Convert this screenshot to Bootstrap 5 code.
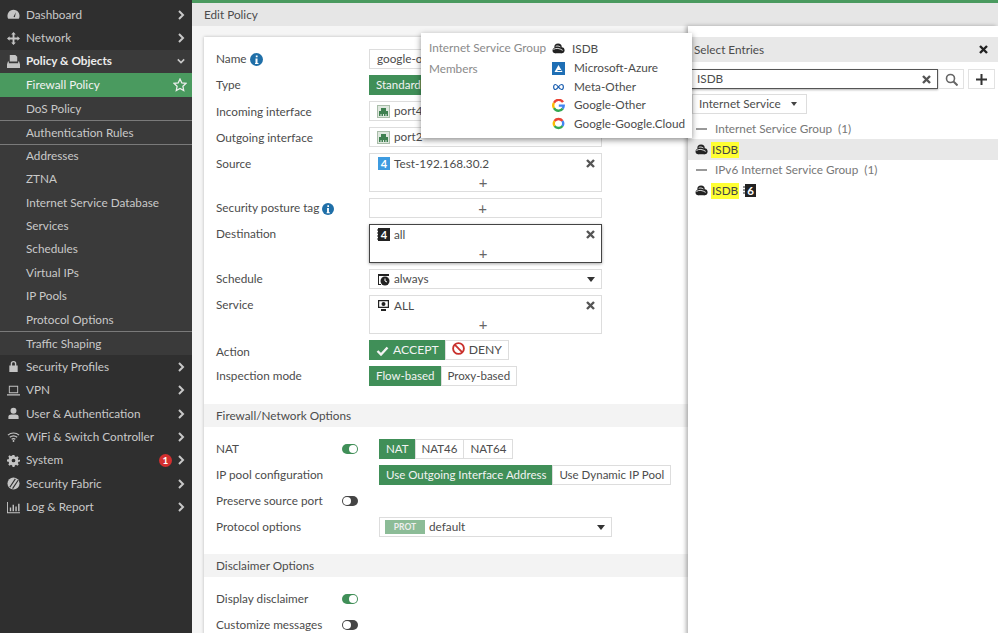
<!DOCTYPE html>
<html lang="en"><head><meta charset="utf-8"><title>Edit Policy</title>
<link rel="stylesheet" href="https://cdn.jsdelivr.net/npm/bootstrap@5.3.0/dist/css/bootstrap.min.css">
<style>
html,body{height:633px;overflow:hidden}
body{font-family:Lato,"Liberation Sans",sans-serif;font-size:11.75px;color:#4c4c4c;background:#f5f5f5;line-height:20px}
.fg-shell{width:998px;height:633px;position:relative;overflow:hidden}
.fg-side{width:192px;flex:none;background:#2f2f2f;color:#c9c9c9;padding-top:3px;height:633px}
.fg-item{height:23.4px;display:flex;align-items:center;padding-left:7px;padding-right:7px;position:relative;color:#c9c9c9}
.fg-item svg.ic{width:13px;height:13px;flex:none;margin-right:6px;fill:#c4c4c4}
.fg-item .chev{width:8px;height:10px;margin-left:auto;flex:none;stroke:#c8c8c8;stroke-width:2;fill:none}
.fg-open{background:#3a3a3a}
.fg-head{background:#3a3a3a;font-weight:700;color:#ececec}
.fg-sub{padding-left:26px;height:23.4px}
.fg-sep{border-top:1px solid #7a7a7a;height:23.7px}
.fg-active{background:#4a9a5f;color:#f2f2f2;height:23.7px}
.fg-star{margin-left:auto;width:14px;height:14px;fill:none;stroke:#eee;stroke-width:1.3;margin-right:-2px}
.fg-badge{background:#d32f2f;color:#fff;font-size:10px;font-weight:700;width:13px;height:13px;line-height:13px;border-radius:50%;text-align:center;margin-left:auto;margin-right:5px}
.fg-badge + .chev{margin-left:0}
.fg-main{flex:1;min-width:0;display:flex;flex-direction:column}
.fg-top{border-top:3px solid #4a9a5f;background:#e6e6e6;height:26px;padding:2px 12px;flex:none}
.fg-form{width:484px;margin-left:12px;margin-top:11px;background:#fff;box-shadow:0 0 3px rgba(0,0,0,.25);padding-top:12px;flex:none;height:600px}
.fg-row{display:flex;padding-left:12px;margin-bottom:6px;min-height:20px}
.fg-gap{margin-bottom:18px}
.fg-gap-s{margin-bottom:17px}
.fg-lab{width:153px;flex:none;line-height:20px;height:20px}
.fg-lab-low{padding-top:2px;line-height:18px}
.fg-lab-lower{padding-top:3px;line-height:18px}
.fg-lab-wide{width:163px}
.fg-box{width:233px;height:20px;border:1px solid #ddd;background:#fff;display:flex;align-items:center;padding:0 6px 0 7px;box-sizing:border-box;white-space:nowrap;overflow:hidden}
.fg-multi{height:39px;display:block;padding:0 6px 0 7px;position:relative}
.fg-line{display:flex;align-items:center;height:19px}
.fg-plus{text-align:center;height:18px;line-height:18px;font-size:15px;color:#666;padding-right:6px}
.fg-x{margin-left:auto;width:9px;height:9px;stroke:#555;stroke-width:2.4;fill:none;flex:none}
.fg-i{width:13px;height:13px;flex:none;margin-right:4px}
.fg-caret{margin-left:auto;width:0;height:0;border-left:4.5px solid transparent;border-right:4.5px solid transparent;border-top:5px solid #333;flex:none}
.fg-focus{border:1px solid #444;box-shadow:0 1px 3px rgba(0,0,0,.35)}
.fg-seg .btn{--bs-btn-padding-y:0;--bs-btn-padding-x:6px;--bs-btn-font-size:11.5px;--bs-btn-line-height:18px;--bs-btn-border-radius:0;--bs-btn-color:#4c4c4c;--bs-btn-border-color:#ddd;--bs-btn-bg:#fff;height:20px;flex:none;font-family:inherit;white-space:nowrap}
.fg-seg .fg-on{--bs-btn-bg:#408f58;--bs-btn-color:#f3f3f3;--bs-btn-border-color:#408f58;background:#408f58;color:#f3f3f3}
.fg-seg.fg-big .btn{--bs-btn-font-size:12.2px}
.fg-sec{background:#f3f3f3;height:23px;line-height:23px;padding-left:12px;margin-bottom:12px}
.fg-tog{width:16px;height:10px;border-radius:5px;background:#408f58;position:relative;flex:none;margin:5px 21px 0 -27px}
.fg-tog::after{content:"";position:absolute;right:1px;top:1px;width:8px;height:8px;border-radius:50%;background:#fff}
.fg-off{background:#444}
.fg-off::after{right:auto;left:1px}
.fg-panel{flex:1;background:#fff;box-shadow:-2px 0 4px rgba(0,0,0,.3);padding-top:11px;z-index:2;position:relative}
.fg-phead{background:#e8e8e8;height:25px;line-height:25px;padding:0 10px 0 6px;display:flex;align-items:center}
.fg-search{display:flex;margin:7px 0 0 2px;height:20px}
.fg-sinput{width:248px;border:1px solid #555;box-shadow:0 1px 2px rgba(0,0,0,.3);display:flex;align-items:center;padding:0 6px;height:20px}
.fg-sbtn{width:26px;height:20px;border:1px solid #e2e2e2;display:flex;align-items:center;justify-content:center}
.fg-sbtn-add{width:27px}
.fg-dd{width:115px;height:20px;border:1px solid #ddd;margin:5px 0 0 4px;padding:0 6px;display:flex;align-items:center;white-space:nowrap}
.fg-dd .fg-caret{border-top-color:#444;border-left-width:3.5px;border-right-width:3.5px;border-top-width:4px;margin-left:10px;margin-right:6px}
.fg-grp{display:flex;align-items:center;height:20px;color:#777;padding-left:8px;margin-top:5px}
.fg-grp-tight{margin-top:0}
.fg-grp i{display:block;width:11px;height:2.5px;background:#999;margin-right:8px}
.fg-ent{display:flex;align-items:center;height:21px;padding-left:7px}
.fg-ent .fg-i{margin-right:3px}
.fg-ent mark{background:#ffff33;padding:0 1px;color:#444;line-height:16px}
.fg-ent .fg-six{margin:0 0 0 4px}
.fg-sel{background:#e8e8e8;margin-top:0}
.fg-tip{position:absolute;left:421px;top:33px;width:271px;height:105px;background:#fff;box-shadow:0 2px 6px rgba(0,0,0,.45);z-index:5;padding:5px 8px;display:grid;grid-template-columns:123px 1fr;grid-template-rows:21px repeat(4,18.5px);white-space:nowrap}
.fg-tip .k{color:#8a8a8a}
.fg-tip .v{display:flex;align-items:center}
.fg-tip .v svg{width:13px;height:13px;margin-right:9px;flex:none}
.fg-tip .v svg.fg-tcloud{margin-right:7px}
.fg-prot{background:#8cbc97;color:#eee;font-size:8.5px;font-weight:700;width:40px;height:14px;line-height:14px;text-align:center;margin:0 4px 0 -2px;flex:none}
</style></head><body>
<svg width="0" height="0" class="d-none">
<symbol id="cloud" viewBox="0 0 14 14"><circle cx="6.500" cy="5.500" r="4" fill="#222"/><circle cx="3.500" cy="9.200" r="2.900" fill="#222"/><circle cx="10.300" cy="8.800" r="3.200" fill="#222"/><rect x="3.500" y="8" width="7" height="4.100" fill="#222"/><path d="M1.500 8c3-1.800 6.500-1.300 10 1M4 4.700c1.500-.7 3.300-.5 5 .6" stroke="#fff" stroke-width=".9" fill="none"/></symbol>
<symbol id="port" viewBox="0 0 13 13"><rect x=".5" y=".5" width="12" height="12" fill="#dfe8df" stroke="#a9bda9"/><path d="M2 11V6h2V3h5v3h2v5z" fill="#3f8050"/><path d="M4 9v2M6.500 9v2M9 9v2" stroke="#dfe8df"/></symbol>
<symbol id="v4" viewBox="0 0 13 13"><rect x="1" width="12" height="13" fill="#3d9be0"/><text x="7" y="10.800" font-size="11" font-weight="700" text-anchor="middle" fill="#fff" font-family="Lato">4</text></symbol>
<symbol id="v4d" viewBox="0 0 13 13"><rect x="1" width="12" height="13" fill="#222"/><path d="M0 2h2M0 5h2M0 8h2M0 11h2" stroke="#222"/><text x="7" y="10.800" font-size="11" font-weight="700" text-anchor="middle" fill="#fff" font-family="Lato">4</text></symbol>
</svg>
<div class="fg-shell d-flex">
<nav class="fg-side">
<div class="fg-item"><svg class="ic" viewBox="0 0 14 14"><path d="M7 2a6.500 6.500 0 0 0-6 9c.2.500.6.700 1 .700h10c.4 0 .8-.2 1-.7a6.500 6.500 0 0 0-6-9zM7 9.500l2.500-5-1 5.500z"/></svg>Dashboard<svg class="chev" viewBox="0 0 8 10"><path d="M2 1l4 4-4 4"/></svg></div>
<div class="fg-item"><svg class="ic" viewBox="0 0 14 14"><path d="M7 0l2.500 2.800H8V6h3.200V4.500L14 7l-2.800 2.500V8H8v3.200h1.500L7 14l-2.500-2.800H6V8H2.800v1.500L0 7l2.800-2.500V6H6V2.800H4.500z"/></svg>Network<svg class="chev" viewBox="0 0 8 10"><path d="M2 1l4 4-4 4"/></svg></div>
<div class="fg-open">
<div class="fg-item fg-head"><svg class="ic" viewBox="0 0 14 14"><path d="M3 0h6l2 2v5H3zM1 7h1v2h10V7h1l1 3v4H0v-4z"/></svg>Policy &amp; Objects<svg class="chev" viewBox="0 0 10 8"><path d="M1 2l4 4 4-4"/></svg></div>
<div class="fg-item fg-sub fg-active">Firewall Policy<svg class="fg-star" viewBox="0 0 14 14"><path d="M7 1l1.800 3.900 4.200.5-3.100 2.900.8 4.200L7 10.400 3.300 12.500l.8-4.200L1 5.400l4.200-.5z"/></svg></div>
<div class="fg-item fg-sub">DoS Policy</div>
<div class="fg-item fg-sub fg-sep">Authentication Rules</div>
<div class="fg-item fg-sub fg-sep">Addresses</div>
<div class="fg-item fg-sub">ZTNA</div>
<div class="fg-item fg-sub">Internet Service Database</div>
<div class="fg-item fg-sub">Services</div>
<div class="fg-item fg-sub">Schedules</div>
<div class="fg-item fg-sub">Virtual IPs</div>
<div class="fg-item fg-sub">IP Pools</div>
<div class="fg-item fg-sub">Protocol Options</div>
<div class="fg-item fg-sub fg-sep">Traffic Shaping</div>
</div>
<div class="fg-item"><svg class="ic" viewBox="0 0 14 14"><path d="M4 6V4a3 3 0 0 1 6 0v2h1.500v7h-9V6zm1.500 0h3V4a1.500 1.500 0 0 0-3 0z"/></svg>Security Profiles<svg class="chev" viewBox="0 0 8 10"><path d="M2 1l4 4-4 4"/></svg></div>
<div class="fg-item"><svg class="ic" viewBox="0 0 14 14"><path d="M2 2h10v8H2zm1 1v6h8V3zM0 11h14v1.500H0z"/></svg>VPN<svg class="chev" viewBox="0 0 8 10"><path d="M2 1l4 4-4 4"/></svg></div>
<div class="fg-item"><svg class="ic" viewBox="0 0 14 14"><circle cx="7" cy="4" r="3.200"/><path d="M1.500 13v-2.500C1.500 8.800 3 8 4.500 8h5c1.500 0 3 .8 3 2.500V13z"/></svg>User &amp; Authentication<svg class="chev" viewBox="0 0 8 10"><path d="M2 1l4 4-4 4"/></svg></div>
<div class="fg-item"><svg class="ic" viewBox="0 0 14 14"><path d="M1 5.500c3.500-3 8.500-3 12 0M3 7.800c2.500-2 5.500-2 8 0M5 10c1.200-.9 2.800-.9 4 0" stroke="#c4c4c4" stroke-width="1.300" fill="none"/><circle cx="7" cy="11.800" r="1"/></svg>WiFi &amp; Switch Controller<svg class="chev" viewBox="0 0 8 10"><path d="M2 1l4 4-4 4"/></svg></div>
<div class="fg-item"><svg class="ic" viewBox="0 0 14 14"><path d="M6 1h2l.4 1.700 1.300.6 1.500-.9 1.400 1.400-.9 1.500.6 1.300L14 6v2l-1.700.4-.6 1.300.9 1.500-1.400 1.400-1.500-.9-1.300.6L8 14H6l-.4-1.700-1.300-.6-1.500.9-1.400-1.400.9-1.500-.6-1.300L0 8V6l1.700-.4.600-1.300-.9-1.500 1.400-1.400 1.500.9 1.300-.6zM7 5a2 2 0 1 0 0 4 2 2 0 0 0 0-4z"/></svg>System<span class="fg-badge">1</span><svg class="chev" viewBox="0 0 8 10"><path d="M2 1l4 4-4 4"/></svg></div>
<div class="fg-item"><svg class="ic" viewBox="0 0 14 14"><circle cx="7" cy="7" r="6.500"/><path d="M3 11l6-9M6 12.500l6-9" stroke="#2f2f2f" stroke-width="1.200"/></svg>Security Fabric<svg class="chev" viewBox="0 0 8 10"><path d="M2 1l4 4-4 4"/></svg></div>
<div class="fg-item"><svg class="ic" viewBox="0 0 14 14"><path d="M0 1h1v11h13v1.200H0zM3 7h1.500v4H3zM6 4h1.500v7H6zM9 6h1.500v5H9zM12 3h1.500v8H12z"/></svg>Log &amp; Report<svg class="chev" viewBox="0 0 8 10"><path d="M2 1l4 4-4 4"/></svg></div>
</nav>
<div class="fg-main">
<div class="fg-top">Edit Policy</div>
<div class="d-flex flex-grow-1">
<section class="fg-form">
<div class="fg-row"><div class="fg-lab">Name <svg width="13" height="13" viewBox="0 0 13 13" class="align-text-bottom"><circle cx="6.500" cy="6.500" r="6.500" fill="#1f6fa8"/><path d="M5.500 5.500h2V10h1v1h-3.500v-1h.5zM5.800 2.500h1.800v1.800H5.800z" fill="#fff"/></svg></div><div class="fg-box">google-other</div></div>
<div class="fg-row"><div class="fg-lab">Type</div><div class="btn-group fg-seg"><button class="btn fg-on" type="button">Standard</button></div></div>
<div class="fg-row"><div class="fg-lab fg-lab-low">Incoming interface</div><div class="fg-box"><svg class="fg-i"><use href="#port"/></svg>port4</div></div>
<div class="fg-row"><div class="fg-lab fg-lab-low">Outgoing interface</div><div class="fg-box"><svg class="fg-i"><use href="#port"/></svg>port2</div></div>
<div class="fg-row"><div class="fg-lab fg-lab-low">Source</div><div class="fg-box fg-multi"><div class="fg-line"><svg class="fg-i"><use href="#v4"/></svg>Test-192.168.30.2<svg class="fg-x" viewBox="0 0 9 9"><path d="M1 1l7 7M8 1l-7 7"/></svg></div><div class="fg-plus">+</div></div></div>
<div class="fg-row"><div class="fg-lab">Security posture tag <svg width="12" height="12" viewBox="0 0 13 13" class="align-text-bottom"><circle cx="6.500" cy="6.500" r="6.500" fill="#1f6fa8"/><path d="M5.500 5.500h2V10h1v1h-3.500v-1h.5zM5.800 2.500h1.800v1.800H5.800z" fill="#fff"/></svg></div><div class="fg-box justify-content-center p-0"><span class="fg-plus">+</span></div></div>
<div class="fg-row"><div class="fg-lab">Destination</div><div class="fg-box fg-multi fg-focus"><div class="fg-line"><svg class="fg-i"><use href="#v4d"/></svg>all<svg class="fg-x" viewBox="0 0 9 9"><path d="M1 1l7 7M8 1l-7 7"/></svg></div><div class="fg-plus">+</div></div></div>
<div class="fg-row"><div class="fg-lab">Schedule</div><div class="fg-box"><svg class="fg-i" viewBox="0 0 13 13"><path d="M1 1h11v2H2v8h2v1H1z" fill="#222"/><circle cx="8" cy="8" r="4.500" fill="#222"/><path d="M8 5.500V8l2 1" stroke="#fff" fill="none"/></svg>always<span class="fg-caret"></span></div></div>
<div class="fg-row"><div class="fg-lab">Service</div><div class="fg-box fg-multi"><div class="fg-line"><svg class="fg-i" viewBox="0 0 13 13"><path d="M1 1h11v8H1zm1.200 1.200v5.600h8.600V2.200zM4 10h5v2H4z" fill="#222"/><circle cx="6.500" cy="5" r="2" fill="#222"/></svg>ALL<svg class="fg-x" viewBox="0 0 9 9"><path d="M1 1l7 7M8 1l-7 7"/></svg></div><div class="fg-plus">+</div></div></div>
<div class="fg-row"><div class="fg-lab fg-lab-lower">Action</div><div class="btn-group fg-seg fg-big"><button class="btn fg-on" type="button"><svg width="13" height="10" viewBox="0 0 12 10" class="me-1"><path d="M1 5l3.500 3.500L11 1.500" stroke="#f3f3f3" stroke-width="2.400" fill="none"/></svg>ACCEPT</button><button class="btn" type="button"><svg width="13" height="13" viewBox="0 0 12 12" class="me-1 align-text-top"><circle cx="6" cy="6" r="5" stroke="#c9302c" stroke-width="1.700" fill="none"/><path d="M2.500 2.500l7 7" stroke="#c9302c" stroke-width="1.700"/></svg>DENY</button></div></div>
<div class="fg-row fg-gap"><div class="fg-lab">Inspection mode</div><div class="btn-group fg-seg"><button class="btn fg-on" type="button">Flow-based</button><button class="btn" type="button">Proxy-based</button></div></div>
<div class="fg-sec">Firewall/Network Options</div>
<div class="fg-row"><div class="fg-lab">NAT</div><span class="fg-tog"></span><div class="btn-group fg-seg"><button class="btn fg-on" type="button">NAT</button><button class="btn" type="button">NAT46</button><button class="btn" type="button">NAT64</button></div></div>
<div class="fg-row"><div class="fg-lab fg-lab-wide">IP pool configuration</div><div class="btn-group fg-seg"><button class="btn fg-on" type="button">Use Outgoing Interface Address</button><button class="btn" type="button">Use Dynamic IP Pool</button></div></div>
<div class="fg-row"><div class="fg-lab">Preserve source port</div><span class="fg-tog fg-off"></span></div>
<div class="fg-row fg-gap-s"><div class="fg-lab fg-lab-wide">Protocol options</div><div class="fg-box"><span class="fg-prot">PROT</span>default<span class="fg-caret"></span></div></div>
<div class="fg-sec">Disclaimer Options</div>
<div class="fg-row"><div class="fg-lab">Display disclaimer</div><span class="fg-tog"></span></div>
<div class="fg-row"><div class="fg-lab">Customize messages</div><span class="fg-tog fg-off"></span></div>
</section>
<aside class="fg-panel">
<div class="fg-phead">Select Entries<svg class="fg-x" viewBox="0 0 9 9"><path d="M1 1l7 7M8 1l-7 7" stroke="#222"/></svg></div>
<div class="fg-search"><div class="fg-sinput">ISDB<svg class="fg-x" viewBox="0 0 9 9"><path d="M1 1l7 7M8 1l-7 7"/></svg></div><div class="fg-sbtn"><svg width="13" height="13" viewBox="0 0 13 13"><circle cx="5.500" cy="5.500" r="4" stroke="#666" stroke-width="1.600" fill="none"/><path d="M8.500 8.500l4 4" stroke="#666" stroke-width="2"/></svg></div><div class="fg-sbtn fg-sbtn-add ms-1"><svg width="11" height="11" viewBox="0 0 11 11"><path d="M5.500 0v11M0 5.500h11" stroke="#333" stroke-width="2"/></svg></div></div>
<div class="fg-dd">Internet Service<span class="fg-caret"></span></div>
<div class="fg-grp"><i></i>Internet Service Group&nbsp; (1)</div>
<div class="fg-ent fg-sel"><svg class="fg-i"><use href="#cloud"/></svg><mark>ISDB</mark></div>
<div class="fg-grp fg-grp-tight"><i></i>IPv6 Internet Service Group&nbsp; (1)</div>
<div class="fg-ent"><svg class="fg-i"><use href="#cloud"/></svg><mark>ISDB</mark><svg class="fg-i fg-six" viewBox="0 0 13 13"><rect x="2" y="0" width="11" height="13" fill="#222"/><path d="M0 3h2M0 6h2M0 9h2" stroke="#222"/><text x="7.500" y="11" font-size="11.500" font-weight="700" text-anchor="middle" fill="#fff" font-family="Lato">6</text></svg></div>
</aside>
</div>
</div>
<div class="fg-tip">
<div class="k">Internet Service Group</div><div class="v"><svg class="fg-tcloud"><use href="#cloud"/></svg>ISDB</div>
<div class="k">Members</div><div class="v"><svg viewBox="0 0 13 13"><rect width="13" height="13" fill="#1f6fb5"/><path d="M6.500 3L10.500 10H2.500z" fill="#fff"/><path d="M5.500 8.500h4" stroke="#1f6fb5"/></svg>Microsoft-Azure</div>
<div></div><div class="v"><svg viewBox="0 0 13 13"><path d="M3.500 4.500c-2.500 0-2.500 5 0 5 2.200 0 3.500-5 6-5s2.500 5 0 5c-2.500 0-3.800-5-6-5z" stroke="#1c5fb0" stroke-width="1.200" fill="none"/></svg>Meta-Other</div>
<div></div><div class="v"><svg viewBox="0 0 13 13" fill="none" stroke-width="2.400"><path d="M11 3.200A5.200 5.200 0 0 0 2 3.800" stroke="#ea4335"/><path d="M2 3.800a5.200 5.200 0 0 0 0 5.400" stroke="#fbbc05"/><path d="M2 9.200a5.200 5.200 0 0 0 8.800.3" stroke="#34a853"/><path d="M10.800 9.500c.6-.9.900-1.700.9-2.900H6.800" stroke="#4285f4"/></svg>Google-Other</div>
<div></div><div class="v"><svg viewBox="0 0 13 13" fill="none" stroke-width="2.400"><path d="M2.500 4A5 5 0 0 1 10.500 4" stroke="#ea4335"/><path d="M10.500 4a5 5 0 0 1 0 5" stroke="#4285f4"/><path d="M10.500 9a5 5 0 0 1-8 0" stroke="#34a853"/><path d="M2.500 9a5 5 0 0 1 0-5" stroke="#fbbc05"/></svg>Google-Google.Cloud</div>
</div>
</div>
</body></html>
